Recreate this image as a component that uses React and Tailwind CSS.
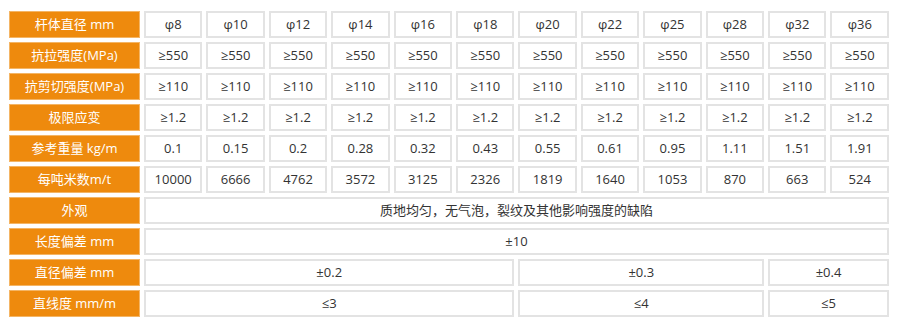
import React from 'react';

const sizes = ['φ8', 'φ10', 'φ12', 'φ14', 'φ16', 'φ18', 'φ20', 'φ22', 'φ25', 'φ28', 'φ32', 'φ36'];

const rows = [
  { label: '抗拉强度(MPa)', values: Array(12).fill('≥550') },
  { label: '抗剪切强度(MPa)', values: Array(12).fill('≥110') },
  { label: '极限应变', values: Array(12).fill('≥1.2') },
  { label: '参考重量 kg/m', values: ['0.1', '0.15', '0.2', '0.28', '0.32', '0.43', '0.55', '0.61', '0.95', '1.11', '1.51', '1.91'] },
  { label: '每吨米数m/t', values: ['10000', '6666', '4762', '3572', '3125', '2326', '1819', '1640', '1053', '870', '663', '524'] },
];

const spanRows = [
  { label: '外观', cells: [{ text: '质地均匀，无气泡，裂纹及其他影响强度的缺陷', span: 12 }] },
  { label: '长度偏差 mm', cells: [{ text: '±10', span: 12 }] },
  { label: '直径偏差 mm', cells: [{ text: '±0.2', span: 6 }, { text: '±0.3', span: 4 }, { text: '±0.4', span: 2 }] },
  { label: '直线度 mm/m', cells: [{ text: '≤3', span: 6 }, { text: '≤4', span: 4 }, { text: '≤5', span: 2 }] },
];

function Head({ children }) {
  return (
    <td className="h-[27px] p-0 bg-[#ee8a0d] border border-[#f4b565] text-white text-center">
      {children}
    </td>
  );
}

function Cell({ children, span }) {
  return (
    <td colSpan={span} className="h-[27px] p-0 bg-white border-2 border-[#e3e3e3] text-[#333] text-center">
      {children}
    </td>
  );
}

export default function App() {
  return (
    <div className="w-[900px] h-[330px] bg-white pt-[7px] pl-[5px] font-['Open_Sans','DejaVu_Sans','Noto_Sans_CJK_SC',sans-serif] text-[13px]">
      <table className="w-[888px] table-fixed border-separate border-spacing-1">
        <colgroup>
          <col className="w-[131px]" />
          {sizes.map((s) => (
            <col key={s} />
          ))}
        </colgroup>
        <tbody>
          <tr>
            <Head>杆体直径 mm</Head>
            {sizes.map((s) => (
              <Cell key={s}>{s}</Cell>
            ))}
          </tr>
          {rows.map((r) => (
            <tr key={r.label}>
              <Head>{r.label}</Head>
              {r.values.map((v, i) => (
                <Cell key={i}>{v}</Cell>
              ))}
            </tr>
          ))}
          {spanRows.map((r) => (
            <tr key={r.label}>
              <Head>{r.label}</Head>
              {r.cells.map((c, i) => (
                <Cell key={i} span={c.span}>{c.text}</Cell>
              ))}
            </tr>
          ))}
        </tbody>
      </table>
    </div>
  );
}
